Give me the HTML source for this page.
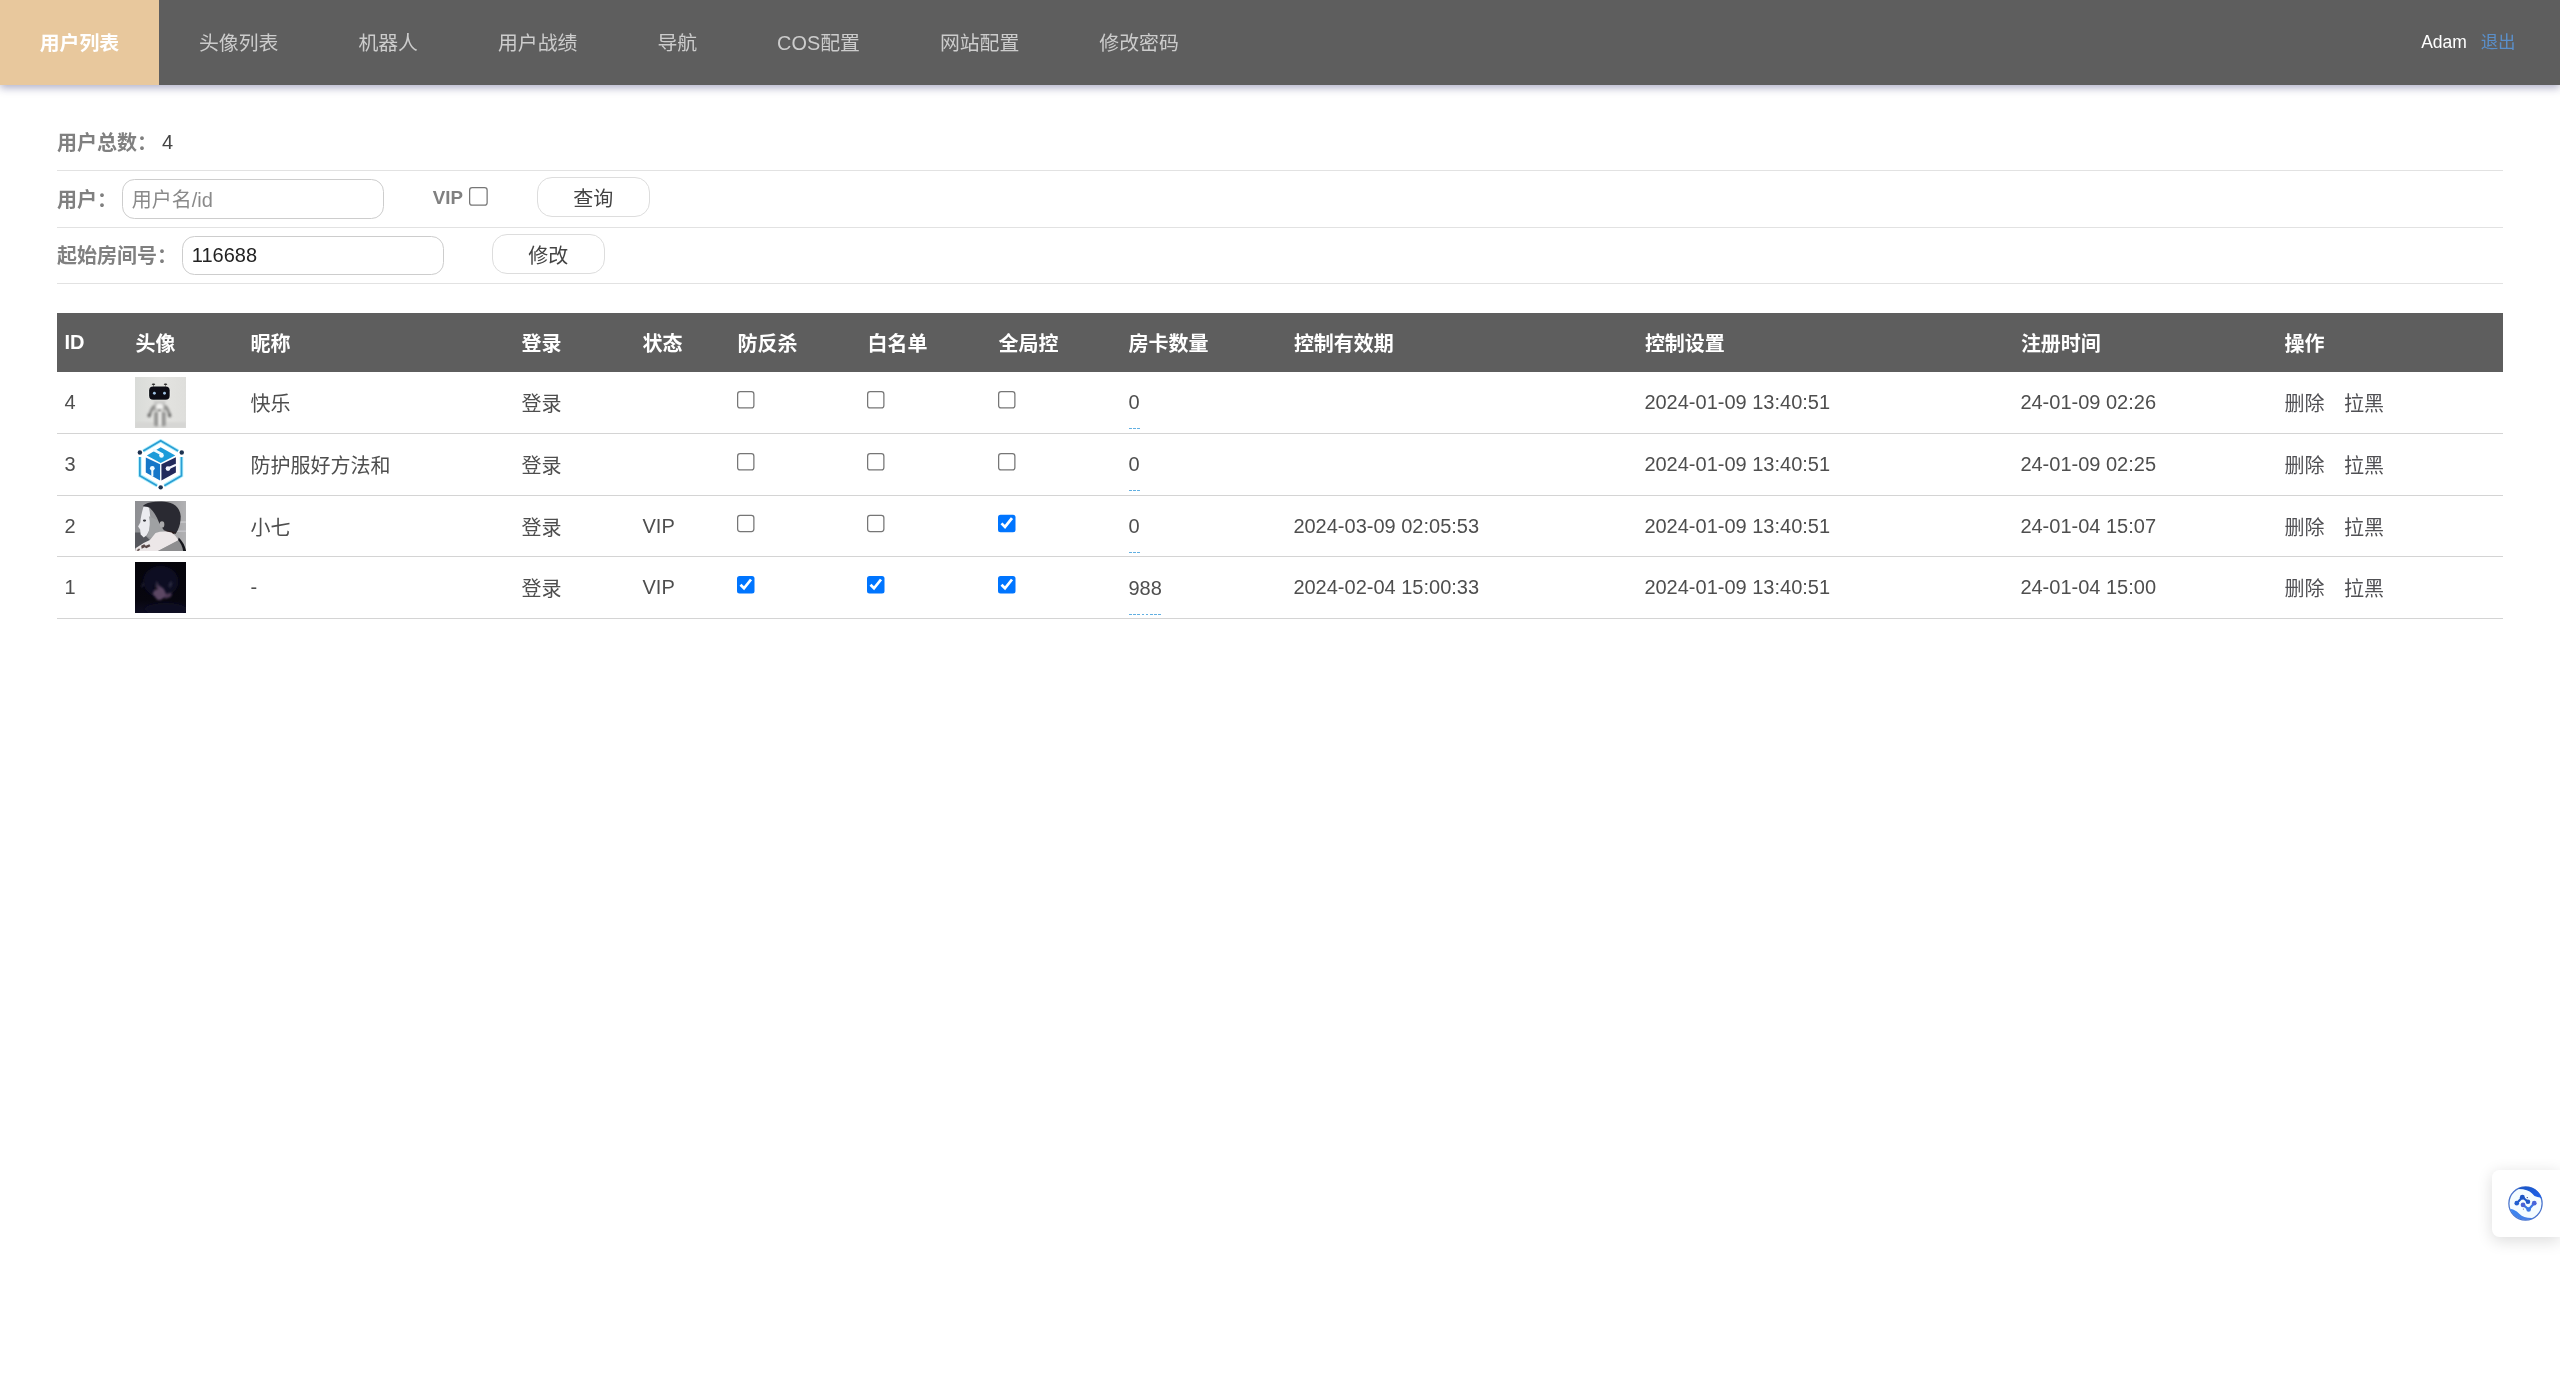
<!DOCTYPE html>
<html lang="zh-CN">
<head>
<meta charset="utf-8">
<title>用户列表</title>
<style>
*{box-sizing:border-box}
html{margin:0;padding:0;background:#fff;overflow:hidden}
body{margin:0;padding:0;zoom:1.25;will-change:transform;width:2048px;height:1104px;overflow:hidden;position:relative;
  font-family:"Liberation Sans","Noto Sans CJK SC",sans-serif;font-size:16px;color:#444;background:#fff}
@media (max-width:2100px) and (min-width:1400px){body{zoom:1}}
@media (max-width:1399px){body{zoom:.625}}
a{text-decoration:none;color:inherit}
.nav{position:relative;height:68px;background:#5e5e5e;box-shadow:0 2.4px 6.4px rgba(40,40,105,.36);display:flex;align-items:stretch;z-index:2}
.nav a{display:block;padding:0 32px;height:68px;line-height:70.2px;color:#ccc;font-size:15.9px;white-space:nowrap}
.nav a.on{background:#e8c89d;color:#fff;font-weight:bold;padding:0 31.8px}
.nav .me{margin-left:auto;padding-right:35.5px;line-height:67.6px;font-size:14px;color:#fff;white-space:nowrap}
.nav .me a{display:inline;padding:0;margin-left:11px;color:#5a8fca;font-size:14px;line-height:67.6px}
.wrap{margin:0 45.6px;width:1956.8px}
.bar{height:45.44px;position:relative;border-bottom:1px solid #e2e2e2;display:flex;align-items:center;white-space:nowrap}
.bar.first{margin-top:22.9px;height:46.24px}
.bar.last{height:44.64px}
.bar.mid{padding-bottom:1.6px}
.bar.mid .txt{position:relative;top:.5px;padding-top:2.6px}
.bar.first b{position:relative;top:-.8px}
.bar.last b{position:relative;top:-.6px}
.bar b{color:#808080;font-weight:bold}
.bar .num{margin-left:4px;color:#444;font-size:16px}
.txt{height:31.4px;border:1px solid #cdcdcd;border-radius:10px;padding:0 7px;font:16px "Liberation Sans","Noto Sans CJK SC",sans-serif;color:#222;outline:none;background:#fff;width:209.6px;margin:0}
.txt::placeholder{color:#8a8a8a;opacity:1}
.btn{height:31.7px;width:90.8px;border:1px solid #ddd;border-radius:12px;background:#fff;font:16px "Liberation Sans","Noto Sans CJK SC",sans-serif;color:#444;text-align:center;line-height:34.6px;padding:0;margin:0;position:relative;top:-1.3px}
input[type=checkbox]{width:14.6px;height:14.6px}
table{border-collapse:collapse;width:1956.8px;margin-top:22.8px;table-layout:fixed}
th{background:#5e5e5e;color:#fff;font-weight:bold;text-align:left;height:47.6px;padding:0 6px;font-size:16px;white-space:nowrap}
td{height:49.3px;padding:0 6px;border-bottom:1px solid #d4d4d4;font-size:16px;white-space:nowrap;vertical-align:middle;color:#4e4e4e}
td input[type=checkbox]{margin:0;vertical-align:middle;position:relative;top:-3px;left:-.6px}
td:nth-child(n+10):nth-child(-n+12){padding-left:5.1px}
th:nth-child(n+10):nth-child(-n+12){padding-left:5.5px}
.av{display:block;width:41.1px;height:41px;margin-left:-.5px}
.cnt{display:inline-block;height:41px;line-height:39.2px;color:#4e4e4e;position:relative;top:1.2px;background:repeating-linear-gradient(90deg,#62b0e2 0,#62b0e2 2.2px,transparent 2.2px,transparent 3.34px) left bottom/100% 1px no-repeat}
.op a{margin-right:15.6px;color:#505054}
.fab{position:absolute;right:0;top:936px;width:54.6px;height:53.6px;background:#fff;border-radius:6px 0 0 6px;box-shadow:0 3px 13px rgba(0,0,0,.14)}
.fab svg{position:absolute;left:13.3px;top:12.9px;width:28px;height:28px}
</style>
</head>
<body>
<div class="nav">
  <a class="on" href="#">用户列表</a><a href="#">头像列表</a><a href="#">机器人</a><a href="#">用户战绩</a><a href="#">导航</a><a href="#">COS配置</a><a href="#">网站配置</a><a href="#">修改密码</a>
  <div class="me">Adam<a href="#">退出</a></div>
</div>
<div class="wrap">
  <div class="bar first"><b>用户总数：</b><span class="num">4</span></div>
  <div class="bar mid"><b>用户：</b><input class="txt" type="text" placeholder="用户名/id" style="margin-left:4px"><b style="margin-left:39px;font-size:15px">VIP</b><input type="checkbox" style="margin:0 0 3.4px 5px;width:14.9px;height:14.9px"><button class="btn" style="margin-left:39px">查询</button></div>
  <div class="bar last"><b>起始房间号：</b><input class="txt" type="text" value="116688" style="margin-left:4px"><button class="btn" style="margin-left:38px">修改</button></div>
  <table>
    <colgroup><col style="width:56.8px"><col style="width:92px"><col style="width:216.8px"><col style="width:96.8px"><col style="width:76px"><col style="width:104px"><col style="width:104.8px"><col style="width:104px"><col style="width:132.8px"><col style="width:280.8px"><col style="width:300.8px"><col style="width:210.4px"><col></colgroup>
    <tr><th>ID</th><th>头像</th><th>昵称</th><th>登录</th><th>状态</th><th>防反杀</th><th>白名单</th><th>全局控</th><th>房卡数量</th><th>控制有效期</th><th>控制设置</th><th>注册时间</th><th>操作</th></tr>
    <tr><td>4</td><td><svg class="av" viewBox="0 0 100 100" preserveAspectRatio="none"><defs><linearGradient id="rbg" x1="0" y1="0" x2="1" y2="0"><stop offset="0" stop-color="#d9dbd8"/><stop offset=".5" stop-color="#e4e4e1"/><stop offset="1" stop-color="#dededb"/></linearGradient><filter id="b1" x="-10%" y="-10%" width="120%" height="120%"><feGaussianBlur stdDeviation="1.1"/></filter><filter id="b2" x="-20%" y="-20%" width="140%" height="140%"><feGaussianBlur stdDeviation="1.6"/></filter></defs><rect width="100" height="100" fill="url(#rbg)"/><rect y="88" width="100" height="12" fill="#d6d6d4" filter="url(#b2)"/><g filter="url(#b1)"><ellipse cx="36" cy="14.3" rx="3.4" ry="1.5" fill="#1a1a1c"/><ellipse cx="59.4" cy="14.3" rx="3.4" ry="1.5" fill="#1a1a1c"/><rect x="35.3" y="15" width="1.4" height="4" fill="#555"/><rect x="58.7" y="15" width="1.4" height="4" fill="#555"/><rect x="26" y="19" width="43" height="26" rx="9" fill="#eeeeec"/><rect x="27.5" y="18.5" width="40" height="26" rx="8" fill="#0b0e14"/><circle cx="37.7" cy="31.6" r="2.8" fill="#9fc0e2"/><circle cx="57.4" cy="31.6" r="2.8" fill="#9fc0e2"/></g><g filter="url(#b2)"><rect x="36" y="47" width="24" height="4" rx="2" fill="#c4c4c2"/><path d="M38 52 h20 l4 14 h-8 l-2 -6 h-8 l-2 6 h-8z" fill="#b0b0ae"/><ellipse cx="48" cy="58" rx="7" ry="6" fill="#f2f2f0"/><rect x="44" y="63" width="7" height="3.4" rx="1.5" fill="#444"/><path d="M36 54 q-8 8 -10 20 l5 2 q2 -10 8 -17z" fill="#8e8e8c"/><path d="M60 54 q8 8 10 20 l-5 2 q-2 -10 -8 -17z" fill="#8e8e8c"/><ellipse cx="27.5" cy="75" rx="3.4" ry="4.2" fill="#747472"/><ellipse cx="67.5" cy="75" rx="3.4" ry="4.2" fill="#747472"/><rect x="37" y="68" width="9" height="28" rx="3" fill="#9a9a98"/><rect x="51" y="68" width="9" height="28" rx="3" fill="#9a9a98"/><rect x="46" y="70" width="5" height="24" fill="#f4f4f2"/></g></svg></td><td>快乐</td><td>登录</td><td></td><td><input type="checkbox"></td><td><input type="checkbox"></td><td><input type="checkbox"></td><td><span class="cnt">0</span></td><td></td><td>2024-01-09 13:40:51</td><td>24-01-09 02:26</td><td class="op"><a href="#">删除</a><a href="#">拉黑</a></td></tr>
    <tr><td>3</td><td><svg class="av" viewBox="0 0 100 100" preserveAspectRatio="none"><defs><filter id="b3" x="-10%" y="-10%" width="120%" height="120%"><feGaussianBlur stdDeviation=".7"/></filter></defs><rect width="100" height="100" fill="#fff"/><g filter="url(#b3)"><g fill="none" stroke="#b4effc" stroke-width="7" stroke-linecap="butt"><path d="M16 23.5 L50 3.5 L84 23.5"/><path d="M9.5 35 V71.5 L43 91"/><path d="M90.5 35 V71.5 L57 91"/></g><g fill="none" stroke="#2b9fd4" stroke-width="3.4" stroke-linecap="butt"><path d="M16 23.5 L50 3.5 L84 23.5"/><path d="M9.5 35 V71.5 L43 91"/><path d="M90.5 35 V71.5 L57 91"/></g><circle cx="9.5" cy="26.2" r="4.3" fill="#1f3150"/><circle cx="91" cy="26.4" r="4.3" fill="#1f3150"/><circle cx="50" cy="94.3" r="4.3" fill="#1f3150"/><path d="M50 16 L78.4 32 L50 46.8 L23 32z" fill="#1b9bd9"/><path d="M21 36.2 L48.8 49.4 V81 L21 65.6z" fill="#1876c8"/><path d="M51.4 49.4 L79.6 35.4 V65.6 L51.4 81z" fill="#232a5c"/><path d="M37 21.5 L52 29.5" stroke="#eefaff" stroke-width="5.2" stroke-linecap="round" fill="none"/><circle cx="51.6" cy="32" r="4.5" fill="#f2fbff"/><circle cx="33.7" cy="57.3" r="4.6" fill="#f2fbff"/><path d="M33.7 57.3 V73" stroke="#eefaff" stroke-width="4" fill="none"/><circle cx="64.2" cy="57.7" r="4.6" fill="#f4f6ff"/><path d="M64.2 57.7 L80 50.4" stroke="#f4f6ff" stroke-width="4.2" fill="none"/></g></svg></td><td>防护服好方法和</td><td>登录</td><td></td><td><input type="checkbox"></td><td><input type="checkbox"></td><td><input type="checkbox"></td><td><span class="cnt">0</span></td><td></td><td>2024-01-09 13:40:51</td><td>24-01-09 02:25</td><td class="op"><a href="#">删除</a><a href="#">拉黑</a></td></tr>
    <tr><td>2</td><td><svg class="av" style="height:40.6px" viewBox="0 0 100 100" preserveAspectRatio="none"><defs><linearGradient id="gbg" x1="0" y1="0" x2="1" y2="0"><stop offset="0" stop-color="#8e8f93"/><stop offset=".6" stop-color="#9c9c9f"/><stop offset="1" stop-color="#b2b2b4"/></linearGradient><filter id="b4" x="-10%" y="-10%" width="120%" height="120%"><feGaussianBlur stdDeviation="1.05"/></filter></defs><rect width="100" height="100" fill="url(#gbg)"/><g filter="url(#b4)"><rect x="84" y="40" width="16" height="3" fill="#c8c8ca"/><rect x="80" y="58" width="20" height="3" fill="#c4c4c8"/><path d="M0 62 L14 62 L30 78 L8 96 L0 96z" fill="#55575b"/><path d="M17 10 Q11 30 10.5 42 L6 50 L10 56 L11 66 L17 72 Q24 68 28 56 Q32 32 27 13z" fill="#ebebef"/><path d="M27 30 Q32 50 24 70 Q36 76 52 64 L56 56 L48 40z" fill="#9fa1a3"/><ellipse cx="18.5" cy="38.5" rx="3.2" ry="2.2" fill="#3a3a40"/><path d="M16 9 Q22 3 40 1.5 Q62 -1 74 6 Q88 14 89 30 Q89 46 83 58 L79 65 L56 57 Q50 50 47 43 Q40 24 28 13 Q22 10 16 11z" fill="#2b2b31"/><ellipse cx="52.5" cy="46.5" rx="4.6" ry="6.4" fill="#a9a9ab"/><path d="M56 57 L80 62 L72 66z" fill="#2a1c1e"/><path d="M40 63 Q55 58 71 62 Q80 68 85 78 L42 100 L0 100 L1 93 Q16 82 29 77z" fill="#ece7e8"/><path d="M42 100 L85 77 Q92 86 95 100z" fill="#8e8e90"/><path d="M85 72 Q96 82 100 100 L94 100 Q92 86 84 77z" fill="#17181c"/><path d="M12 88 l6 -3 l3 3 l7 -3 l2 4 l-8 4 l-3 -2 l-6 3z" fill="#5a4a4a"/><path d="M3 97 l5 -4 l2 3 l-4 3z" fill="#6a5a58"/></g></svg></td><td>小七</td><td>登录</td><td>VIP</td><td><input type="checkbox"></td><td><input type="checkbox"></td><td><input type="checkbox" checked></td><td><span class="cnt">0</span></td><td>2024-03-09 02:05:53</td><td>2024-01-09 13:40:51</td><td>24-01-04 15:07</td><td class="op"><a href="#">删除</a><a href="#">拉黑</a></td></tr>
    <tr><td>1</td><td><svg class="av" viewBox="0 0 100 100" preserveAspectRatio="none"><defs><filter id="b5" x="-30%" y="-30%" width="160%" height="160%"><feGaussianBlur stdDeviation="3"/></filter><filter id="b6" x="-30%" y="-30%" width="160%" height="160%"><feGaussianBlur stdDeviation="1.8"/></filter><linearGradient id="dbg" x1="0" y1="0" x2="0" y2="1"><stop offset="0" stop-color="#05040a"/><stop offset=".75" stop-color="#07060f"/><stop offset="1" stop-color="#0e0d22"/></linearGradient></defs><rect width="100" height="100" fill="url(#dbg)"/><ellipse cx="50" cy="38" rx="34" ry="30" fill="#0f0f24" filter="url(#b5)"/><ellipse cx="60" cy="92" rx="40" ry="12" fill="#0f0e24" filter="url(#b5)"/><g filter="url(#b6)"><path d="M44 44 L56 52 L62 66 L50 74 L44 74 L34 62z" fill="#5c4663"/><path d="M60 62 L72 60 L70 68 L58 72z" fill="#4e3a55"/><path d="M42 36 L48 48 L40 48z" fill="#3a3046"/><ellipse cx="69" cy="44" rx="3" ry="6" fill="#2c2b42" transform="rotate(20 69 44)"/><ellipse cx="15" cy="45" rx="2.4" ry="5" fill="#1c1c30" transform="rotate(20 15 45)"/><path d="M36 46 L46 52 L38 56z" fill="#0c0a18"/></g></svg></td><td>-</td><td>登录</td><td>VIP</td><td><input type="checkbox" checked></td><td><input type="checkbox" checked></td><td><input type="checkbox" checked></td><td><span class="cnt">988</span></td><td>2024-02-04 15:00:33</td><td>2024-01-09 13:40:51</td><td>24-01-04 15:00</td><td class="op"><a href="#">删除</a><a href="#">拉黑</a></td></tr>
  </table>
</div>
<div class="fab"><svg viewBox="0 0 100 100"><defs><linearGradient id="fg1" x1="0" y1="0" x2="1" y2="1"><stop offset="0" stop-color="#1a56c4"/><stop offset="1" stop-color="#1f62ee"/></linearGradient><linearGradient id="fg2" x1="0" y1="0" x2="1" y2="1"><stop offset="0" stop-color="#3a86f4"/><stop offset="1" stop-color="#4a7fe0"/></linearGradient><filter id="fb" x="-10%" y="-10%" width="120%" height="120%"><feGaussianBlur stdDeviation=".8"/></filter></defs><g filter="url(#fb)"><circle cx="50" cy="50" r="47.5" fill="#f4fcff" stroke="#4a74cc" stroke-width="3.6"/><path d="M30 6.5 A48 48 0 0 1 96.5 36 Q92 32 84 31.5 Q74 30 68 21 Q58 9 30 8.5z" fill="url(#fg1)"/><path d="M70 93.5 A48 48 0 0 1 6 66 Q10 65 16 67.5 Q26 71 33 80 Q44 92 70 91.5z" fill="url(#fg2)"/><path d="M25 49 L41 32 L57 45" fill="none" stroke="#1f59c9" stroke-width="6.4" stroke-linecap="round" stroke-linejoin="round"/><circle cx="25" cy="49" r="6.6" fill="#2460d0"/><circle cx="41" cy="32" r="7" fill="#1c54c4"/><circle cx="57" cy="45" r="6.6" fill="#2058c8"/><path d="M43 54 L59 67 L75 49" fill="none" stroke="#3a78e6" stroke-width="6.4" stroke-linecap="round" stroke-linejoin="round"/><circle cx="43" cy="54" r="6.8" fill="#4a63d6"/><circle cx="59" cy="67" r="6.6" fill="#3a78e6"/><circle cx="75" cy="49" r="6.8" fill="#4a66da"/><circle cx="55" cy="33" r="1.8" fill="#1b2f66"/><circle cx="44" cy="66" r="1.8" fill="#7a86a6"/></g></svg></div>
</body>
</html>
